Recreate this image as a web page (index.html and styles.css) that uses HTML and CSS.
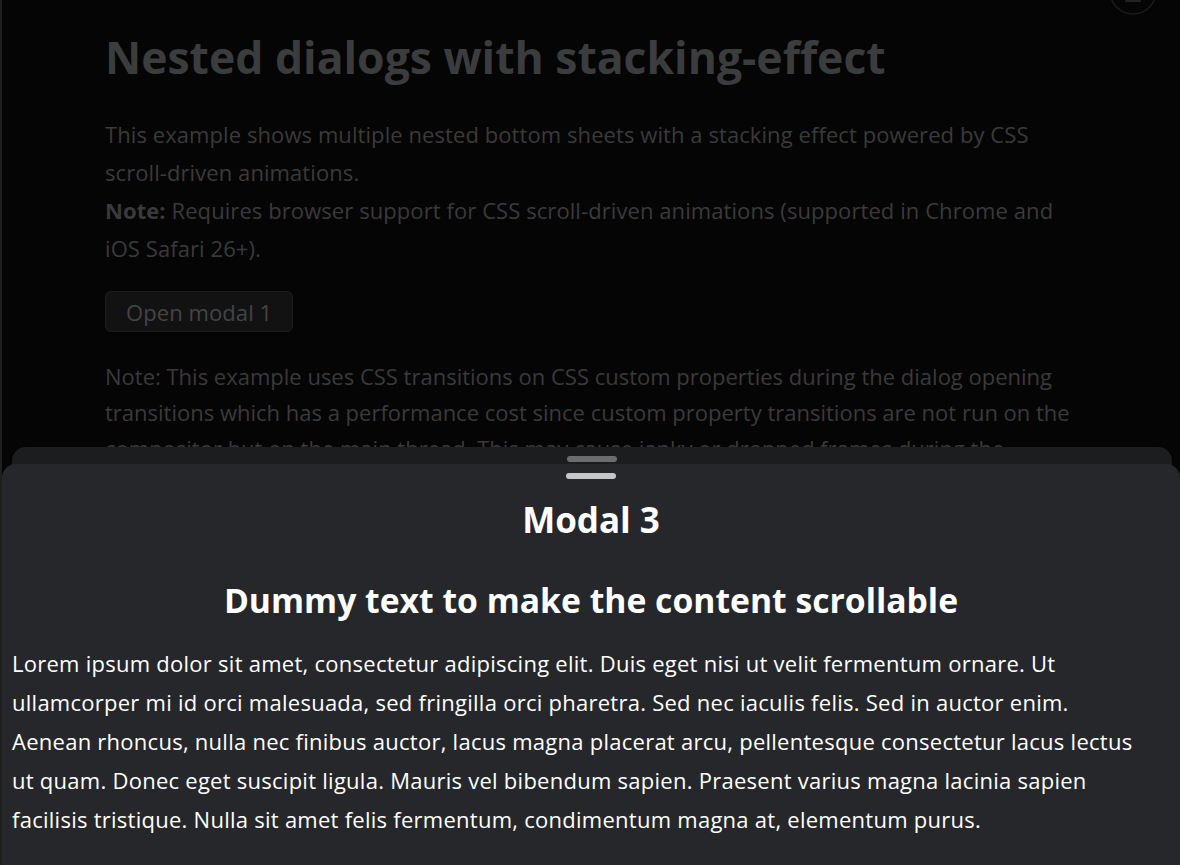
FILE: index.html
```html
<!DOCTYPE html>
<html lang="en">
<head>
<meta charset="utf-8">
<title>Nested dialogs with stacking-effect</title>
<link rel="stylesheet" href="styles.css">
</head>
<body>
<div class="edge"></div>
<button class="theme-btn" aria-label="Toggle theme">
  <svg viewBox="0 0 48 48" width="48" height="48"><circle cx="24" cy="24" r="23" fill="none" stroke="#1c1c1c" stroke-width="1.5"/><path d="M14 30h20M17 34h14" stroke="#222" stroke-width="2" stroke-linecap="round"/></svg>
</button>
<main class="page">
  <h1 class="page-title">Nested dialogs with stacking-effect</h1>
  <p class="lead">This example shows multiple nested bottom sheets with a stacking effect powered by CSS scroll-driven animations.<br><strong>Note:</strong> Requires browser support for CSS scroll-driven animations (supported in Chrome and iOS Safari 26+).</p>
  <button class="open-btn">Open modal 1</button>
  <p class="note">Note: This example uses CSS transitions on CSS custom properties during the dialog opening transitions which has a performance cost since custom property transitions are not run on the compositor but on the main thread. This may cause janky or dropped frames during the transition.</p>
</main>
<section class="sheet sheet-2">
  <div class="handle handle-dim"></div>
</section>
<section class="sheet sheet-3">
  <div class="handle"></div>
  <h2 class="sheet-title">Modal 3</h2>
  <h3 class="sheet-sub">Dummy text to make the content scrollable</h3>
  <p class="sheet-text">Lorem ipsum dolor sit amet, consectetur adipiscing elit. Duis eget nisi ut velit fermentum ornare. Ut ullamcorper mi id orci malesuada, sed fringilla orci pharetra. Sed nec iaculis felis. Sed in auctor enim. Aenean rhoncus, nulla nec finibus auctor, lacus magna placerat arcu, pellentesque consectetur lacus lectus ut quam. Donec eget suscipit ligula. Mauris vel bibendum sapien. Praesent varius magna lacinia sapien facilisis tristique. Nulla sit amet felis fermentum, condimentum magna at, elementum purus.</p>
</section>
</body>
</html>
```
FILE: styles.css
```css
html, body {
  margin: 0;
  padding: 0;
  height: 100%;
  overflow: hidden;
}
body {
  background: #050505;
  font-family: "Open Sans", "Noto Sans", sans-serif;
  color: #3a3a3b;
}
.edge {
  position: fixed;
  left: 0;
  top: 0;
  bottom: 0;
  width: 2px;
  background: #1f1f20;
}
.theme-btn {
  position: absolute;
  top: -33px;
  left: 1109px;
  width: 48px;
  height: 48px;
  padding: 0;
  border: 0;
  background: transparent;
}
.page {
  max-width: 978px;
  margin: 0 0 0 105px;
  padding-top: 30px;
}
.page-title {
  margin: 0 0 32px;
  font-size: 44.5px;
  line-height: 1.2;
  font-weight: 700;
  color: #3b3c3e;
}
.lead, .note {
  font-size: 22px;
  letter-spacing: 0.08px;
  line-height: 38px;
  margin: 0 0 24px;
  max-width: 970px;
}
.lead strong {
  font-weight: 700;
}
.note {
  letter-spacing: 0;
  line-height: 36px;
  margin-top: 26px;
  max-width: 978px;
}
.open-btn {
  display: block;
  font-family: inherit;
  font-size: 22px;
  letter-spacing: 0.08px;
  color: #444446;
  background: #121213;
  border: 1px solid #1d1d1e;
  border-radius: 6px;
  padding: 0 20px;
  height: 41px;
}
.sheet {
  position: fixed;
  bottom: 0;
  border-radius: 14px 14px 0 0;
}
.sheet-2 {
  left: 12px;
  right: 8px;
  top: 447px;
  background: #1c1d1f;
}
.sheet-3 {
  left: 2px;
  right: 0;
  top: 464px;
  background: #26272a;
  color: #ffffff;
  padding: 0 10px;
}
.handle {
  width: 50px;
  height: 6px;
  border-radius: 3px;
  background: #c6c6c8;
  margin: 9px auto 0;
}
.handle-dim {
  background: #6d6d70;
}
.sheet-title {
  text-align: center;
  font-size: 35px;
  font-weight: 700;
  line-height: 1.2;
  margin: 20px 0 0;
}
.sheet-sub {
  text-align: center;
  font-size: 33.7px;
  font-weight: 700;
  line-height: 1.2;
  margin: 39px 0 0;
}
.sheet-text {
  font-size: 22px;
  letter-spacing: 0.26px;
  line-height: 39px;
  margin: 24px 20px 0 0;
}
```
